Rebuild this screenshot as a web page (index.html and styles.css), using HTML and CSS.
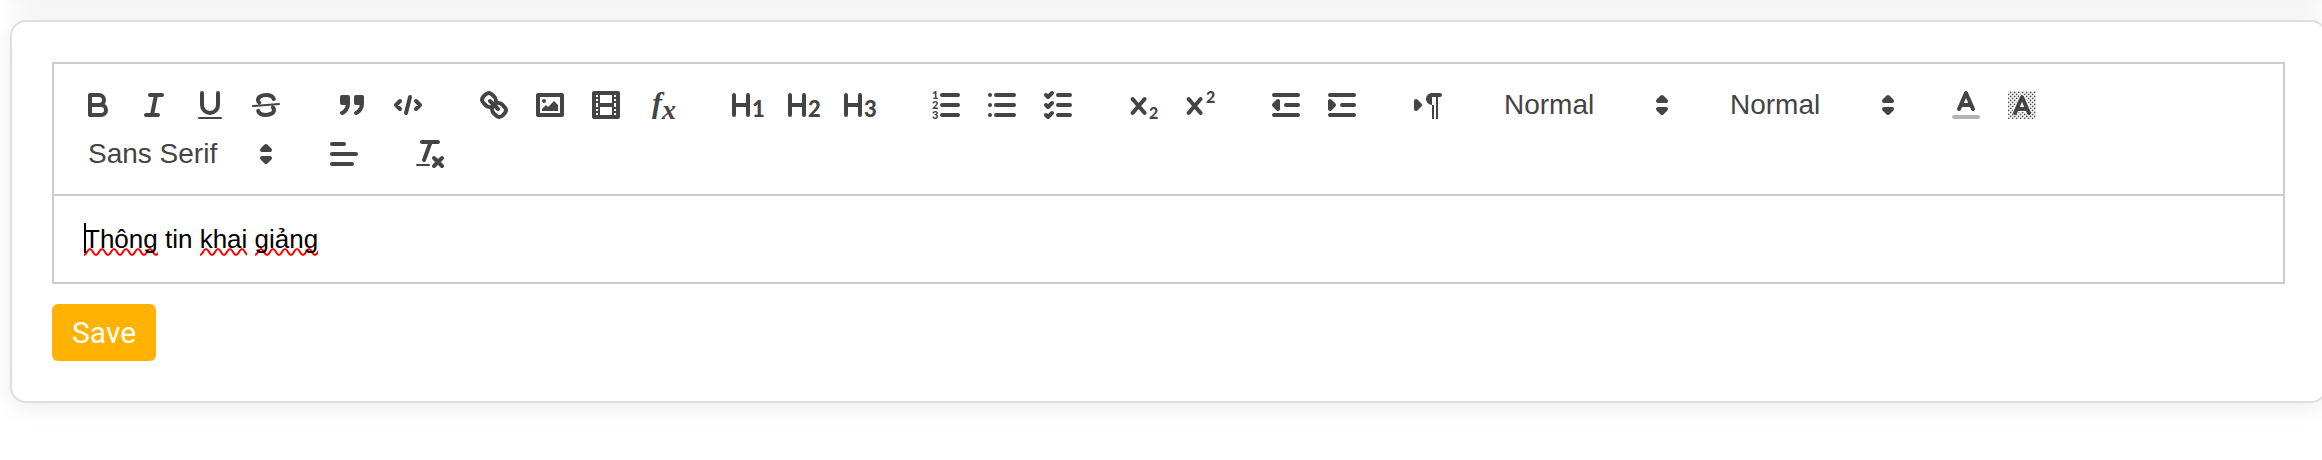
FILE: index.html
```
<!DOCTYPE html>
<html lang="vi">
<head>
<meta charset="utf-8">
<title>Editor</title>
<link rel="stylesheet" href="styles.css">
</head>
<body>
<div class="previous-card"></div>
<main class="card">
  <div class="editor">
    <div class="toolbar" role="toolbar" aria-label="Formatting">
      <div class="group">
        <button type="button" class="tool" aria-label="Bold"><svg viewBox="0 0 18 18"><path class="stroke" d="M5,4H9.5A2.5,2.5,0,0,1,9.5,9H5Z"/><path class="stroke" d="M5,9h5.5A2.5,2.5,0,0,1,10.5,14H5Z"/></svg></button>
        <button type="button" class="tool" aria-label="Italic"><svg viewBox="0 0 18 18"><path class="stroke" d="M7,4H13M5,14H11M8,14L10,4"/></svg></button>
        <button type="button" class="tool" aria-label="Underline"><svg viewBox="0 0 18 18"><path class="stroke" d="M5,3V9a4,4,0,0,0,8,0V3"/><rect class="fill" height="1" rx="0.5" width="12" x="3" y="15"/></svg></button>
        <button type="button" class="tool" aria-label="Strike"><svg viewBox="0 0 18 18"><path class="stroke thin" d="M15.5,8.5L2.5,9.5"/><path class="stroke" d="M12.9,6C12.5,4.8,10.9,4,9,4C6.7,4,5,5.1,5,6.5C5,7.2,5.2,7.5,5.6,7.8M5.1,12C5.5,13.2,7.1,14,9,14C11.3,14,13,12.9,13,11.5C13,10.8,12.8,10.5,12.4,10.2"/></svg></button>
      </div>
      <div class="group">
        <button type="button" class="tool" aria-label="Blockquote"><svg viewBox="0 0 18 18"><rect class="stroke fill" height="3" width="3" x="4" y="5"/><rect class="stroke fill" height="3" width="3" x="11" y="5"/><path class="stroke fill" d="M7,8c0,4.031-3,5-3,5"/><path class="stroke fill" d="M14,8c0,4.031-3,5-3,5"/></svg></button>
        <button type="button" class="tool" aria-label="Code"><svg viewBox="0 0 18 18"><path class="stroke" d="M5,7L3,9L5,11M13,7L15,9L13,11M10,5L8,13"/></svg></button>
      </div>
      <div class="group">
        <button type="button" class="tool" aria-label="Link"><svg viewBox="0 0 18 18"><path class="stroke" d="M7,7L11,11"/><path class="stroke" d="M8.9,4.577a3.476,3.476,0,0,1,.36,4.679A3.476,3.476,0,0,1,4.577,8.9C3.185,7.5,2.035,6.4,4.217,4.217S7.5,3.185,8.9,4.577Z"/><path class="stroke" d="M13.423,9.1a3.476,3.476,0,0,0-4.679-.36,3.476,3.476,0,0,0,.36,4.679c1.392,1.392,2.5,2.542,4.679.36S14.815,10.5,13.423,9.1Z"/></svg></button>
        <button type="button" class="tool" aria-label="Image"><svg viewBox="0 0 18 18"><rect class="stroke" height="10" width="12" x="3" y="4"/><circle class="fill" cx="6" cy="7" r="1"/><polygon class="fill" points="5 12 5 11 7 9 8 10 11 7 13 9 13 12"/></svg></button>
        <button type="button" class="tool" aria-label="Video"><svg viewBox="0 0 18 18"><rect class="stroke" height="12" width="12" x="3" y="3"/><path class="fill" d="M5,3h1v12H5ZM12,3h1v12H12ZM5,8h8v2H5ZM3,5h3v1H3ZM3,7h3v1H3ZM3,10h3v1H3ZM3,12h3v1H3ZM12,5h3v1H12ZM12,7h3v1H12ZM12,10h3v1H12ZM12,12h3v1H12Z"/></svg></button>
        <button type="button" class="tool" aria-label="Formula"><svg viewBox="0 0 18 18"><text class="formula" x="4" y="13" font-size="15">f</text><text class="formula" x="9" y="16" font-size="14">x</text></svg></button>
      </div>
      <div class="group">
        <button type="button" class="tool" aria-label="Heading 1"><svg viewBox="0 0 18 18"><path class="stroke" d="M2,4V14M9,4V14M2,9H9"/><text class="digit" x="11" y="15" font-size="11">1</text></svg></button>
        <button type="button" class="tool" aria-label="Heading 2"><svg viewBox="0 0 18 18"><path class="stroke" d="M2,4V14M9,4V14M2,9H9"/><text class="digit" x="11" y="15" font-size="11">2</text></svg></button>
        <button type="button" class="tool" aria-label="Heading 3"><svg viewBox="0 0 18 18"><path class="stroke" d="M2,4V14M9,4V14M2,9H9"/><text class="digit" x="11" y="15" font-size="11">3</text></svg></button>
      </div>
      <div class="group">
        <button type="button" class="tool" aria-label="Ordered list"><svg viewBox="0 0 18 18"><path class="stroke" d="M7,4H15M7,9H15M7,14H15"/><text class="digit" x="2" y="6" font-size="5.5">1</text><text class="digit" x="2" y="11" font-size="5.5">2</text><text class="digit" x="2" y="16" font-size="5.5">3</text></svg></button>
        <button type="button" class="tool" aria-label="Bullet list"><svg viewBox="0 0 18 18"><path class="stroke" d="M6,4H15M6,9H15M6,14H15M3,4H3.01M3,9H3.01M3,14H3.01"/></svg></button>
        <button type="button" class="tool" aria-label="Check list"><svg viewBox="0 0 18 18"><path class="stroke" d="M9,4H15M9,9H15M9,14H15M3,4L4,5L6,3M3,9L4,10L6,8M3,14L4,15L6,13"/></svg></button>
      </div>
      <div class="group">
        <button type="button" class="tool" aria-label="Subscript"><svg viewBox="0 0 18 18"><path class="stroke" d="M3.3,6L9.3,13M9.3,6L3.3,13"/><text class="digit" x="11.5" y="16" font-size="8">2</text></svg></button>
        <button type="button" class="tool" aria-label="Superscript"><svg viewBox="0 0 18 18"><path class="stroke" d="M3.3,6L9.3,13M9.3,6L3.3,13"/><text class="digit" x="12" y="8" font-size="8">2</text></svg></button>
      </div>
      <div class="group">
        <button type="button" class="tool" aria-label="Outdent"><svg viewBox="0 0 18 18"><path class="stroke" d="M3,14H15M3,4H15M9,9H15"/><polygon class="stroke fill" points="5 7 5 11 3 9"/></svg></button>
        <button type="button" class="tool" aria-label="Indent"><svg viewBox="0 0 18 18"><path class="stroke" d="M3,14H15M3,4H15M9,9H15"/><polygon class="stroke fill" points="3 7 3 11 5 9"/></svg></button>
      </div>
      <div class="group">
        <button type="button" class="tool" aria-label="Text direction"><svg viewBox="0 0 18 18"><polygon class="stroke fill" points="3 11 5 9 3 7"/><path class="stroke" d="M15,4H11"/><path class="fill" d="M11,3a3,3,0,0,0,0,6h1V3ZM11,4h1V16H11ZM13,4h1V16H13Z"/></svg></button>
      </div>
      <div class="group picker">
        <select aria-label="Size"><option>Normal</option></select>
        <svg viewBox="0 0 18 18"><polygon class="stroke" points="7 11 9 13 11 11"/><polygon class="stroke" points="7 7 9 5 11 7"/></svg>
      </div>
      <div class="group picker">
        <select aria-label="Heading"><option>Normal</option></select>
        <svg viewBox="0 0 18 18"><polygon class="stroke" points="7 11 9 13 11 11"/><polygon class="stroke" points="7 7 9 5 11 7"/></svg>
      </div>
      <div class="group">
        <button type="button" class="tool" aria-label="Text color"><svg viewBox="0 0 18 18"><path class="stroke faded" d="M3,15H15"/><path class="stroke" d="M5.5,11L9,3L12.5,11M11.63,9H6.38"/></svg></button>
        <button type="button" class="tool" aria-label="Background color"><svg viewBox="0 0 18 18"><defs><pattern id="hatch" width="2" height="2" patternUnits="userSpaceOnUse"><path class="hatch" d="M-1,1L1,-1M0,2L2,0M1,3L3,1"/></pattern></defs><rect x="2" y="2" width="14" height="14" fill="url(#hatch)"/><path class="halo" d="M5.5,13L9,5L12.5,13M11.63,11H6.38"/><path class="stroke" d="M5.5,13L9,5L12.5,13M11.63,11H6.38"/></svg></button>
      </div>
      <div class="group picker wide">
        <select aria-label="Font"><option>Sans Serif</option></select>
        <svg viewBox="0 0 18 18"><polygon class="stroke" points="7 11 9 13 11 11"/><polygon class="stroke" points="7 7 9 5 11 7"/></svg>
      </div>
      <div class="group">
        <button type="button" class="tool" aria-label="Align"><svg viewBox="0 0 18 18"><path class="stroke" d="M3,9H15M3,14H13M3,4H9"/></svg></button>
      </div>
      <div class="group">
        <button type="button" class="tool" aria-label="Clear formatting"><svg viewBox="0 0 18 18"><path class="stroke" d="M5,3H13M6,12L9.35,3M11,11L15,15M15,11L11,15"/><rect class="fill" height="1" rx="0.5" width="7" x="2" y="14"/></svg></button>
      </div>
    </div>
    <div class="content" contenteditable="true" spellcheck="false" role="textbox" aria-label="Content"><p><span class="caret"></span><span class="misspelt">Thông</span> tin <span class="misspelt">khai</span> <span class="misspelt">giảng</span></p></div>
  </div>
  <button type="button" class="save">Save</button>
</main>
</body>
</html>
```
FILE: styles.css
```
* {
  box-sizing: border-box;
}

body {
  display: flow-root;
  min-height: 100vh;
  margin: 0;
  padding-left: 10px;
  background: #fff;
  overflow: hidden;
  font-family: Roboto, sans-serif;
}

.previous-card {
  height: 20px;
  margin: -20px -5px 20px 0;
  border-radius: 16px;
  box-shadow: 0 4px 32px rgba(0, 0, 0, 0.1);
}

.card {
  margin-right: -5px;
  padding: 40px;
  background: #fff;
  border: 2px solid #dedede;
  border-radius: 16px;
  box-shadow: 0 4px 24px rgba(0, 0, 0, 0.08);
}

.editor {
  border: 2px solid #ccc;
  font-family: "Liberation Sans", Arial, sans-serif;
}

.toolbar {
  display: flex;
  flex-wrap: wrap;
  gap: 1px 30px;
  padding: 17px 16px 16px;
  border-bottom: 2px solid #ccc;
}

.group {
  display: flex;
  height: 48px;
}

.tool {
  width: 56px;
  height: 48px;
  padding: 6px 10px;
  border: 0;
  background: none;
}

.toolbar svg {
  display: block;
  width: 36px;
  height: 36px;
  overflow: visible;
}

.stroke {
  fill: none;
  stroke: #444;
  stroke-width: 2;
  stroke-linecap: round;
  stroke-linejoin: round;
}

.fill {
  fill: #444;
}

.thin {
  stroke-width: 1;
}

.faded {
  opacity: 0.4;
}

.hatch {
  fill: none;
  stroke: #444;
  stroke-width: 0.6;
  stroke-dasharray: 0.9 0.5;
}

.halo {
  fill: none;
  stroke: #fff;
  stroke-width: 3;
  stroke-linejoin: round;
}

.digit {
  fill: #444;
  font-family: Lato, sans-serif;
  font-weight: 900;
}

.formula {
  fill: #444;
  font-family: "Liberation Serif", serif;
  font-style: italic;
  font-weight: 700;
}

.picker {
  position: relative;
  align-items: center;
  width: 196px;
}

.wide {
  width: 216px;
}

.picker select {
  appearance: none;
  width: 100%;
  height: 48px;
  padding: 0 36px 2px 18px;
  border: 0;
  background: none;
  color: #444;
  font: 500 28px "Liberation Sans", Arial, sans-serif;
}

.picker svg {
  position: absolute;
  right: 2px;
  pointer-events: none;
}

.content {
  padding: 24px 30px;
  color: #000;
  font-size: 26px;
  line-height: 38px;
  outline: 0;
}

.content p {
  position: relative;
  margin: 0;
}

.caret {
  position: absolute;
  left: 0;
  top: 3px;
  width: 2px;
  height: 30px;
  background: #000;
}

.misspelt {
  padding-bottom: 2px;
  background: url("data:image/svg+xml,%3Csvg xmlns='http://www.w3.org/2000/svg' width='12' height='8'%3E%3Cpath d='M-6 1C-3 1-3 7 0 7S3 1 6 1 9 7 12 7 15 1 18 1' fill='none' stroke='red' stroke-width='2'/%3E%3C/svg%3E") repeat-x left bottom;
}

.save {
  display: block;
  margin-top: 20px;
  padding: 6px 20px;
  border: 0;
  border-radius: 6px;
  background: #ffb300;
  color: #fff;
  font: 400 30px/45px Roboto, sans-serif;
}
```
